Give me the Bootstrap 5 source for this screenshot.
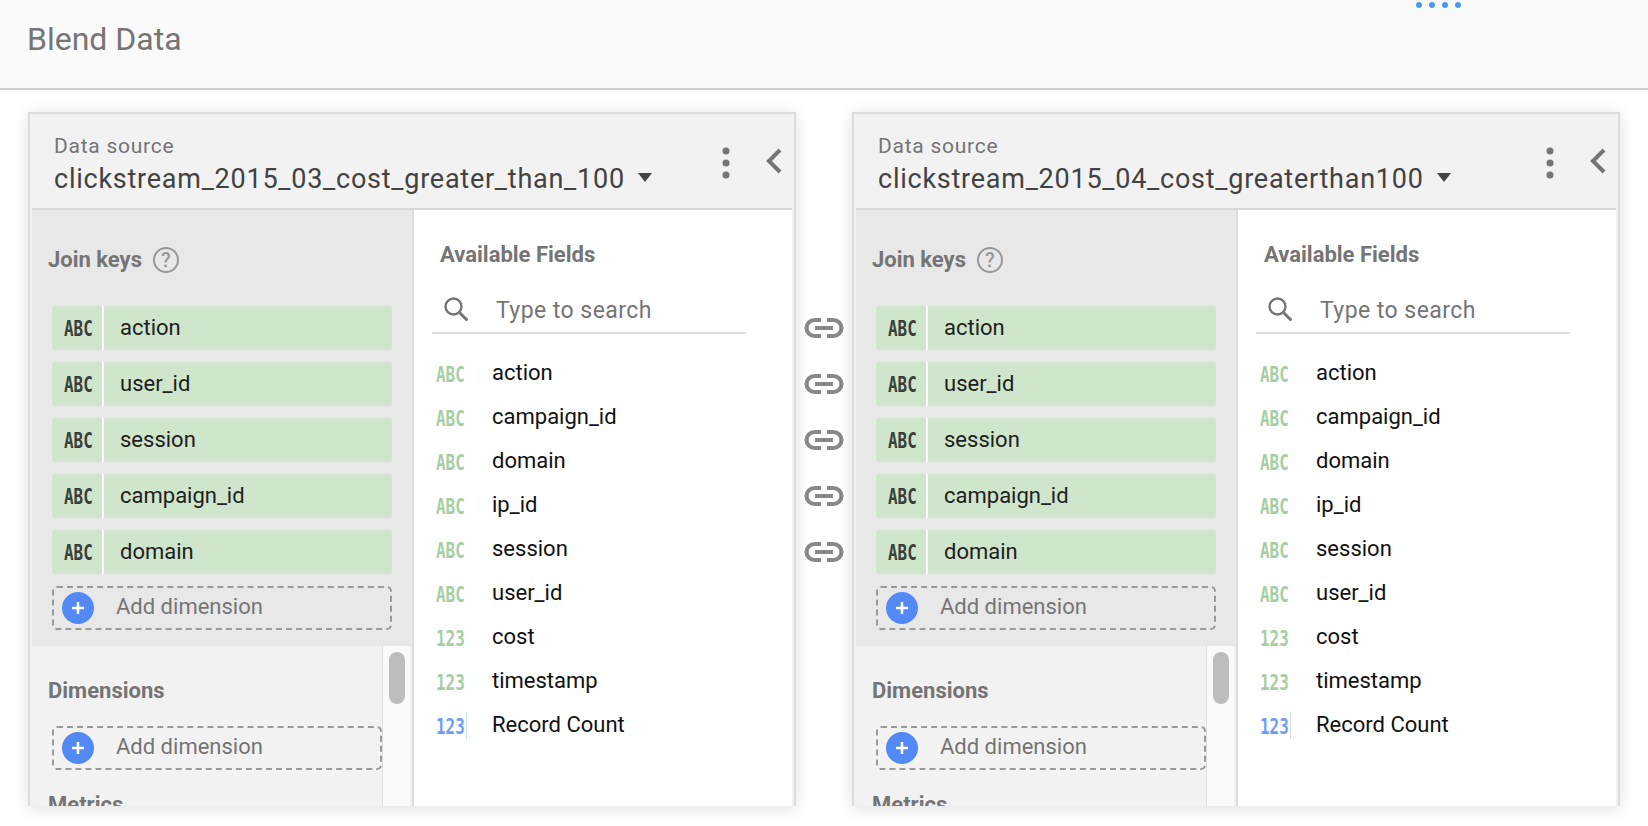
<!DOCTYPE html>
<html lang="en">
<head>
  <meta charset="UTF-8" />
  <title>Blend Data</title>
  <link href="https://cdn.jsdelivr.net/npm/bootstrap@5.3.0/dist/css/bootstrap.min.css" rel="stylesheet">
  <style>
    body { font-family: Roboto, "Liberation Sans", sans-serif; background: #fff; height: 826px; overflow: hidden; }
    .top-bar { height: 90px; background: #fafafa; border-bottom: 2px solid #ccc; padding-left: 27px; position: relative; }
    .top-title { font-size: 32px; font-weight: 400; color: #757575; margin: 0; line-height: 78px; }
    .load-dots { position: absolute; left: 1416px; top: 2px; gap: 7px; }
    .load-dots i { width: 6px; height: 6px; border-radius: 50%; background: #4a9af5; display: block; }
    .blend-row { padding: 22px 0 0 28px; }
    .src-panel { width: 768px; height: 694px; flex: none; border: 2px solid #ddd; border-bottom: 0; background: #f2f2f2; padding: 0 2px; box-shadow: 0 2px 14px rgba(0,0,0,.13); overflow: hidden; }
    .src-head { height: 96px; padding: 19px 0 0 22px; border-bottom: 2px solid #d8d8d8; }
    .src-label { font-size: 21px; line-height: 27px; color: #757575; letter-spacing: .75px; }
    .src-name { font-size: 27px; line-height: 38px; color: #424242; letter-spacing: .75px; }
    .src-caret { width: 0; height: 0; border: 7px solid transparent; border-top: 9px solid #444; border-bottom: 0; margin: 0 0 4px 13px; }
    .kebab { position: absolute; left: 690px; top: 33px; }
    .collapse-arrow { position: absolute; left: 734px; top: 34px; }
    .src-head-wrap { position: relative; }
    .keys-col { width: 382px; flex: none; border-right: 2px solid #ddd; }
    .keys-box { height: 436px; background: #e8e8e8; padding: 0 20px; }
    .sec-label { font-size: 22px; font-weight: 700; color: #757575; line-height: 28px; margin-left: -4px; }
    .keys-head { height: 96px; padding-top: 4px; }
    .help-mark { width: 26px; height: 26px; border: 2px solid #999; border-radius: 50%; color: #999; font-size: 20px; line-height: 22px; text-align: center; margin-left: 11px; font-weight: 500; }
    .key-chip { height: 44px; margin-bottom: 12px; background: #cfe5cc; border-radius: 4px; font-size: 22px; color: #212121; }
    .key-type { width: 52px; height: 44px; flex: none; border-right: 2px solid #fff; }
    .key-name { padding-left: 16px; margin-bottom: 2px; }
    .type-tag { font-family: "DejaVu Sans Mono", "Liberation Mono", monospace; font-weight: 700; font-size: 21px; line-height: 1; display: inline-block; transform: translateY(1px) scaleX(.76); transform-origin: left center; letter-spacing: 0; }
    .key-type .type-tag { color: #3a3f3a; margin-left: 12px; }
    .add-box { height: 44px; border: 2px dashed #999; border-radius: 5px; font-size: 22px; color: #757575; background: transparent; padding-left: 8px; }
    .add-plus { width: 32px; height: 32px; border-radius: 50%; background: #5289f5; flex: none; margin-right: 22px; }
    .add-text { margin-bottom: 4px; }
    .lower-box { height: 160px; overflow: hidden; }
    .lower-main { width: 351px; flex: none; border-right: 1px solid #ddd; padding: 31px 0 0 20px; height: 160px; overflow: hidden; }
    .lower-main .add-box { width: 330px; margin: 21px 0 21px; }
    .scroll-track { width: 29px; background: #fafafa; padding: 6px 0 0 6px; border-right: 2px solid #f2f2f2; }
    .scroll-thumb { width: 16px; height: 52px; border-radius: 8px; background: #bdbdbd; }
    .fields-col { background: #fff; }
    .fields-title { font-size: 22px; font-weight: 700; color: #757575; line-height: 28px; padding: 31px 0 0 26px; }
    .field-search { margin: 19px 0 16px 18px; width: 314px; height: 46px; border-bottom: 2px solid #ddd; padding-left: 12px; }
    .field-search svg { flex: none; margin-bottom: 3px; }
    .field-search input { border: 0; background: transparent; padding: 2px 0 0; box-shadow: none; font-size: 23px; color: #757575; margin-left: 28px; letter-spacing: .45px; }
    .field-search input::placeholder { color: #757575; opacity: 1; }
    .field-row { height: 44px; font-size: 22px; color: #111; padding-left: 22px; }
    .field-type { width: 56px; flex: none; }
    .field-type .type-tag { color: #a5cfa3; margin-top: 5px; transform: translateY(2px) scaleX(.76); }
    .field-type.is-calc { position: relative; }
    .field-type.is-calc .type-tag { color: #6f9df5; }
    .calc-tick { position: absolute; left: 30px; top: 4px; width: 1px; height: 27px; background: #cfdcf8; }
    .link-col { width: 56px; flex: none; padding-top: 206px; }
    .link-mark { display: block; width: 40px; height: 20px; margin: 0 auto 36px; }
  </style>
</head>
<body>
  <svg width="0" height="0" class="position-absolute">
    <symbol id="i-link" viewBox="0 0 40 20"><path d="M17 2H10.5a8 8 0 0 0 0 16H17M23 2h6.5a8 8 0 0 1 0 16H23" fill="none" stroke="#888" stroke-width="4"/><path d="M11 10H29" stroke="#888" stroke-width="4"/></symbol>
    <symbol id="i-plus" viewBox="0 0 32 32"><path d="M16 10V22M10 16H22" stroke="#fff" stroke-width="2.6"/></symbol>
    <symbol id="i-search" viewBox="0 0 24 24"><circle cx="9.5" cy="9.5" r="8" fill="none" stroke="#757575" stroke-width="2.4"/><path d="M15 15L23.5 23.5" stroke="#757575" stroke-width="3"/></symbol>
    <symbol id="i-kebab" viewBox="0 0 8 32"><circle cx="4" cy="4" r="3.5" fill="#757575"/><circle cx="4" cy="16" r="3.5" fill="#757575"/><circle cx="4" cy="28" r="3.5" fill="#757575"/></symbol>
    <symbol id="i-back" viewBox="0 0 16 26"><path d="M14 2L3 13L14 24" fill="none" stroke="#757575" stroke-width="4"/></symbol>
  </svg>

  <header class="top-bar">
    <h1 class="top-title">Blend Data</h1>
    <div class="load-dots d-flex"><i></i><i></i><i></i><i></i></div>
  </header>

  <main class="blend-row d-flex">
    <section class="src-panel d-flex flex-column">
      <div class="src-head-wrap">
        <div class="src-head">
          <div class="src-label">Data source</div>
          <div class="d-flex align-items-center"><span class="src-name">clickstream_2015_03_cost_greater_than_100</span><span class="src-caret"></span></div>
        </div>
        <svg class="kebab" width="8" height="32"><use href="#i-kebab"/></svg>
        <svg class="collapse-arrow" width="16" height="26"><use href="#i-back"/></svg>
      </div>
      <div class="d-flex flex-grow-1">
        <div class="keys-col">
          <div class="keys-box">
            <div class="keys-head d-flex align-items-center"><span class="sec-label">Join keys</span><span class="help-mark">?</span></div>
            <div class="key-chip d-flex align-items-center"><span class="key-type d-flex align-items-center"><span class="type-tag">ABC</span></span><span class="key-name">action</span></div>
            <div class="key-chip d-flex align-items-center"><span class="key-type d-flex align-items-center"><span class="type-tag">ABC</span></span><span class="key-name">user_id</span></div>
            <div class="key-chip d-flex align-items-center"><span class="key-type d-flex align-items-center"><span class="type-tag">ABC</span></span><span class="key-name">session</span></div>
            <div class="key-chip d-flex align-items-center"><span class="key-type d-flex align-items-center"><span class="type-tag">ABC</span></span><span class="key-name">campaign_id</span></div>
            <div class="key-chip d-flex align-items-center"><span class="key-type d-flex align-items-center"><span class="type-tag">ABC</span></span><span class="key-name">domain</span></div>
            <div class="add-box d-flex align-items-center"><svg class="add-plus" viewBox="0 0 32 32"><use href="#i-plus"/></svg><span class="add-text">Add dimension</span></div>
          </div>
          <div class="lower-box d-flex">
            <div class="lower-main">
              <div class="sec-label">Dimensions</div>
              <div class="add-box d-flex align-items-center"><svg class="add-plus" viewBox="0 0 32 32"><use href="#i-plus"/></svg><span class="add-text">Add dimension</span></div>
              <div class="sec-label">Metrics</div>
            </div>
            <div class="scroll-track flex-grow-1"><div class="scroll-thumb"></div></div>
          </div>
        </div>
        <div class="fields-col flex-grow-1">
          <div class="fields-title">Available Fields</div>
          <div class="field-search d-flex align-items-center"><svg width="24" height="24"><use href="#i-search"/></svg><input class="form-control" type="text" placeholder="Type to search"></div>
          <div class="field-row d-flex align-items-center"><span class="field-type"><span class="type-tag">ABC</span></span>action</div>
          <div class="field-row d-flex align-items-center"><span class="field-type"><span class="type-tag">ABC</span></span>campaign_id</div>
          <div class="field-row d-flex align-items-center"><span class="field-type"><span class="type-tag">ABC</span></span>domain</div>
          <div class="field-row d-flex align-items-center"><span class="field-type"><span class="type-tag">ABC</span></span>ip_id</div>
          <div class="field-row d-flex align-items-center"><span class="field-type"><span class="type-tag">ABC</span></span>session</div>
          <div class="field-row d-flex align-items-center"><span class="field-type"><span class="type-tag">ABC</span></span>user_id</div>
          <div class="field-row d-flex align-items-center"><span class="field-type"><span class="type-tag">123</span></span>cost</div>
          <div class="field-row d-flex align-items-center"><span class="field-type"><span class="type-tag">123</span></span>timestamp</div>
          <div class="field-row d-flex align-items-center"><span class="field-type is-calc"><span class="type-tag">123</span><span class="calc-tick"></span></span>Record Count</div>
        </div>
      </div>
    </section>

    <div class="link-col">
      <svg class="link-mark"><use href="#i-link"/></svg>
      <svg class="link-mark"><use href="#i-link"/></svg>
      <svg class="link-mark"><use href="#i-link"/></svg>
      <svg class="link-mark"><use href="#i-link"/></svg>
      <svg class="link-mark"><use href="#i-link"/></svg>
    </div>

    <section class="src-panel d-flex flex-column">
      <div class="src-head-wrap">
        <div class="src-head">
          <div class="src-label">Data source</div>
          <div class="d-flex align-items-center"><span class="src-name">clickstream_2015_04_cost_greaterthan100</span><span class="src-caret"></span></div>
        </div>
        <svg class="kebab" width="8" height="32"><use href="#i-kebab"/></svg>
        <svg class="collapse-arrow" width="16" height="26"><use href="#i-back"/></svg>
      </div>
      <div class="d-flex flex-grow-1">
        <div class="keys-col">
          <div class="keys-box">
            <div class="keys-head d-flex align-items-center"><span class="sec-label">Join keys</span><span class="help-mark">?</span></div>
            <div class="key-chip d-flex align-items-center"><span class="key-type d-flex align-items-center"><span class="type-tag">ABC</span></span><span class="key-name">action</span></div>
            <div class="key-chip d-flex align-items-center"><span class="key-type d-flex align-items-center"><span class="type-tag">ABC</span></span><span class="key-name">user_id</span></div>
            <div class="key-chip d-flex align-items-center"><span class="key-type d-flex align-items-center"><span class="type-tag">ABC</span></span><span class="key-name">session</span></div>
            <div class="key-chip d-flex align-items-center"><span class="key-type d-flex align-items-center"><span class="type-tag">ABC</span></span><span class="key-name">campaign_id</span></div>
            <div class="key-chip d-flex align-items-center"><span class="key-type d-flex align-items-center"><span class="type-tag">ABC</span></span><span class="key-name">domain</span></div>
            <div class="add-box d-flex align-items-center"><svg class="add-plus" viewBox="0 0 32 32"><use href="#i-plus"/></svg><span class="add-text">Add dimension</span></div>
          </div>
          <div class="lower-box d-flex">
            <div class="lower-main">
              <div class="sec-label">Dimensions</div>
              <div class="add-box d-flex align-items-center"><svg class="add-plus" viewBox="0 0 32 32"><use href="#i-plus"/></svg><span class="add-text">Add dimension</span></div>
              <div class="sec-label">Metrics</div>
            </div>
            <div class="scroll-track flex-grow-1"><div class="scroll-thumb"></div></div>
          </div>
        </div>
        <div class="fields-col flex-grow-1">
          <div class="fields-title">Available Fields</div>
          <div class="field-search d-flex align-items-center"><svg width="24" height="24"><use href="#i-search"/></svg><input class="form-control" type="text" placeholder="Type to search"></div>
          <div class="field-row d-flex align-items-center"><span class="field-type"><span class="type-tag">ABC</span></span>action</div>
          <div class="field-row d-flex align-items-center"><span class="field-type"><span class="type-tag">ABC</span></span>campaign_id</div>
          <div class="field-row d-flex align-items-center"><span class="field-type"><span class="type-tag">ABC</span></span>domain</div>
          <div class="field-row d-flex align-items-center"><span class="field-type"><span class="type-tag">ABC</span></span>ip_id</div>
          <div class="field-row d-flex align-items-center"><span class="field-type"><span class="type-tag">ABC</span></span>session</div>
          <div class="field-row d-flex align-items-center"><span class="field-type"><span class="type-tag">ABC</span></span>user_id</div>
          <div class="field-row d-flex align-items-center"><span class="field-type"><span class="type-tag">123</span></span>cost</div>
          <div class="field-row d-flex align-items-center"><span class="field-type"><span class="type-tag">123</span></span>timestamp</div>
          <div class="field-row d-flex align-items-center"><span class="field-type is-calc"><span class="type-tag">123</span><span class="calc-tick"></span></span>Record Count</div>
        </div>
      </div>
    </section>
  </main>
  <script src="https://cdn.jsdelivr.net/npm/bootstrap@5.3.0/dist/js/bootstrap.bundle.min.js"></script>
</body>
</html>
